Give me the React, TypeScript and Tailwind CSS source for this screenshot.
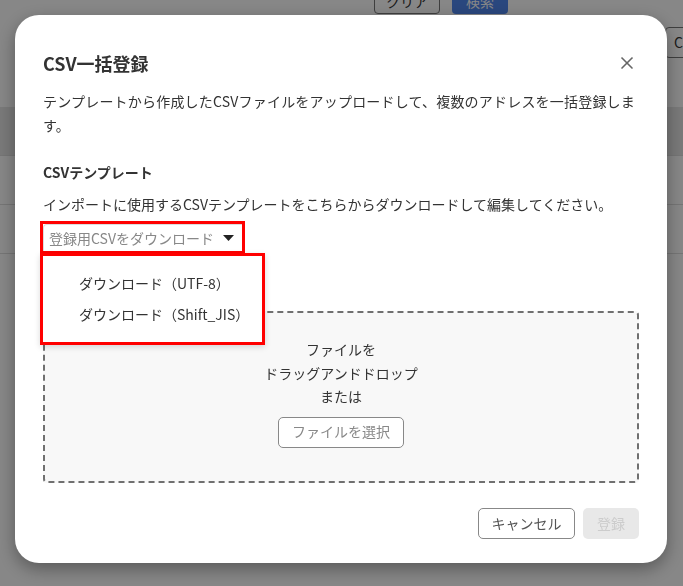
import { X } from "lucide-react"

function BackgroundPage() {
  return (
    <div className="w-full h-[586px] overflow-hidden bg-white text-[#333]">
      {/* search buttons (cut off at top) */}
      <div className="flex justify-end gap-3 pr-[175px] -mt-[12px]">
        <button className="h-[26px] w-[66px] rounded border border-[#777] text-sm">クリア</button>
        <button className="h-[26px] w-[56px] rounded bg-[#4f86ee] text-sm text-white">検索</button>
      </div>
      <div className="flex justify-end pt-[13px] pb-[49px]">
        <div className="h-[31px] w-[60px] -mr-[42px] rounded border border-[#777] px-2 text-sm leading-[29px]">CSV</div>
      </div>
      <div className="h-[49px] border-b border-[#dedede] bg-[#e6e6e6]" />
      <div className="h-[49px] border-b border-[#dedede]" />
      <div className="h-[49px] border-b border-[#dedede]" />
    </div>
  )
}

export default function App() {
  return (
    <div className="relative font-['Noto_Sans_CJK_JP','Noto_Sans',sans-serif]">
      <BackgroundPage />

      {/* overlay */}
      <div className="fixed inset-0 bg-black/[0.47]" />

      {/* modal */}
      <div className="fixed left-[15px] top-[15px] w-[652px] rounded-[24px] bg-white px-[28px] pt-[34px] pb-[24px] text-[#333] shadow-[0_6px_18px_rgba(0,0,0,0.35)]">
        <div className="flex items-center justify-between">
          <h2 className="text-[18px] font-bold leading-[28px]">CSV一括登録</h2>
          <button className="mr-[2px] text-[#666]">
            <X className="h-[20px] w-[20px]" strokeWidth={2} />
          </button>
        </div>

        <p className="mt-[12px] text-[14px] leading-[24px] tracking-[0.2px]">
          テンプレートから作成したCSVファイルをアップロードして、複数のアドレスを一括登録します。
        </p>

        <h3 className="mt-[23px] text-[14px] font-bold leading-[24px]">CSVテンプレート</h3>
        <p className="mt-[8px] text-[14px] leading-[24px]">
          インポートに使用するCSVテンプレートをこちらからダウンロードして編集してください。
        </p>

        {/* dropdown */}
        <div className="relative mt-[8px] w-fit">
          <div className="outline outline-[3px] outline-[#ff0000]">
            <button className="flex h-[27px] items-center gap-[9px] rounded-tl border-l border-t border-[#ddd] pl-[5px] pr-[8px] text-[14px] text-[#888]">
              登録用CSVをダウンロード
              <svg width="11" height="6" viewBox="0 0 11 6">
                <path d="M0 0h11L5.5 6z" fill="#222" />
              </svg>
            </button>
          </div>
          <div className="absolute left-[-3px] top-[29px] z-10 w-[225px] border-[3px] border-[#ff0000] bg-white pt-[12px] pb-[12px] shadow-[0_2px_6px_rgba(0,0,0,0.15)]">
            <div className="pl-[36px] text-[14px] leading-[31px] text-[#333]">ダウンロード（UTF-8）</div>
            <div className="pl-[36px] text-[14px] leading-[31px] text-[#333]">ダウンロード（Shift_JIS）</div>
          </div>
        </div>

        {/* drop zone */}
        <div className="mt-[60px] flex h-[172px] flex-col items-center rounded border-2 border-dashed border-[#707070] bg-[#f8f8f8] pt-[25px] text-[14px] leading-[23.5px]">
          <span>ファイルを</span>
          <span>ドラッグアンドドロップ</span>
          <span>または</span>
          <button className="mt-[8px] h-[31px] rounded-[5px] border border-[#888] bg-white px-[13px] text-[14px] text-[#888]">
            ファイルを選択
          </button>
        </div>

        {/* footer */}
        <div className="mt-[25px] flex justify-end gap-[8px]">
          <button className="h-[31px] w-[97px] rounded-[5px] border border-[#888] text-[14px] text-[#555]">キャンセル</button>
          <button className="h-[31px] w-[56px] rounded-[5px] bg-[#e8e8e8] text-[14px] text-[#ccc]">登録</button>
        </div>
      </div>
    </div>
  )
}
